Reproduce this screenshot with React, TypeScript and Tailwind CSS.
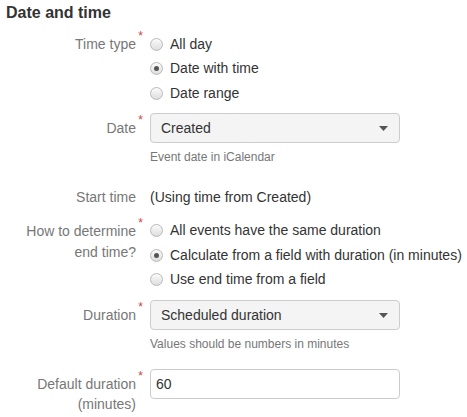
import type { ReactNode } from "react";

const font = { fontFamily: '"Liberation Sans", Arial, sans-serif' };

function Label({ children, required, className = "" }: { children: ReactNode; required?: boolean; className?: string }) {
  return (
    <div className={`w-[136px] shrink-0 text-right text-[14px] text-[#777] ${className}`}>
      <span className="relative">
        {children}
        {required && (
          <span className="absolute -right-[7px] -top-[6px] text-[12px] leading-none text-[#d43f3a]">*</span>
        )}
      </span>
    </div>
  );
}

function Radio({ label, checked }: { label: string; checked?: boolean }) {
  return (
    <div className="flex h-[24.5px] items-center">
      <span className="flex h-[13px] w-[13px] items-center justify-center rounded-full border border-[#b9b9b9] bg-gradient-to-b from-[#fbfbfb] to-[#dedede]">
        {checked && <span className="h-[5px] w-[5px] rounded-full bg-[#555]" />}
      </span>
      <span className="ml-[7px] text-[14px] text-[#333]">{label}</span>
    </div>
  );
}

function Select({ value }: { value: string }) {
  return (
    <div className="flex h-[30px] w-[250px] items-center justify-between rounded-[4px] border border-[#ccc] bg-[#f4f4f4] pl-[10px] pr-[11px] text-[14px] text-[#333]">
      <span>{value}</span>
      <svg width="9" height="5" viewBox="0 0 9 5">
        <path d="M0 0h9L4.5 5z" fill="#555" />
      </svg>
    </div>
  );
}

function Help({ children }: { children: ReactNode }) {
  return <div className="mt-[6px] text-[12px] leading-[16px] text-[#777]">{children}</div>;
}

export default function App() {
  return (
    <div className="h-[417px] w-[467px] overflow-hidden bg-white" style={font}>
      <h2 className="ml-[6px] mt-[3px] text-[16px] font-bold leading-[20px] text-[#333]">Date and time</h2>

      <div className="mt-[9px] flex gap-[14px]">
        <Label required className="leading-[25px]">Time type</Label>
        <div>
          <Radio label="All day" />
          <Radio label="Date with time" checked />
          <Radio label="Date range" />
        </div>
      </div>

      <div className="mt-[7.5px] flex gap-[14px]">
        <Label required className="leading-[30px]">Date</Label>
        <div>
          <Select value="Created" />
          <Help>Event date in iCalendar</Help>
        </div>
      </div>

      <div className="mt-[22px] flex gap-[14px] leading-[20px]">
        <Label>Start time</Label>
        <div className="text-[14px] text-[#333]">(Using time from Created)</div>
      </div>

      <div className="mt-[11.5px] flex gap-[14px]">
        <Label required className="pt-[2px] leading-[21.5px]">
          How to determine
          <br />
          end time?
        </Label>
        <div>
          <Radio label="All events have the same duration" />
          <Radio label="Calculate from a field with duration (in minutes)" checked />
          <Radio label="Use end time from a field" />
        </div>
      </div>

      <div className="mt-[8px] flex gap-[14px]">
        <Label required className="leading-[30px]">Duration</Label>
        <div>
          <Select value="Scheduled duration" />
          <Help>Values should be numbers in minutes</Help>
        </div>
      </div>

      <div className="mt-[17px] flex gap-[14px]">
        <Label required className="pt-[5px] leading-[20px]">
          Default duration
          <br />
          (minutes)
        </Label>
        <div className="flex h-[30px] w-[250px] items-center rounded-[4px] border border-[#ccc] bg-white pl-[5px] text-[14px] text-[#333]">
          60
        </div>
      </div>
    </div>
  );
}
